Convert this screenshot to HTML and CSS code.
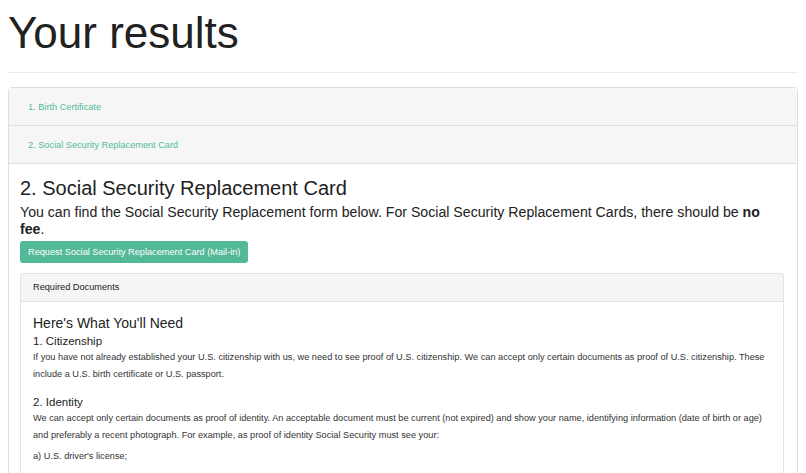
FILE: index.html
```html
<!DOCTYPE html>
<html lang="en">
<head>
<meta charset="utf-8">
<title>Your results</title>
<link rel="stylesheet" href="styles.css">
</head>
<body>
<h1 class="title">Your results</h1>
<hr class="rule">
<div class="accordion">
  <div class="acc-heading"><a class="acc-link" href="#">1. Birth Certificate</a></div>
  <div class="acc-heading"><a class="acc-link" href="#">2. Social Security Replacement Card</a></div>
  <div class="acc-body">
    <h2 class="section-title">2. Social Security Replacement Card</h2>
    <p class="lead">You can find the Social Security Replacement form below. For Social Security Replacement Cards, there should be <strong>no fee</strong>.</p>
    <a class="btn" href="#">Request Social Security Replacement Card (Mail-in)</a>
    <div class="panel">
      <div class="panel-heading">Required Documents</div>
      <div class="panel-body">
        <h3 class="need">Here's What You'll Need</h3>
        <h4 class="item-title first">1. Citizenship</h4>
        <p class="text">If you have not already established your U.S. citizenship with us, we need to see proof of U.S. citizenship. We can accept only certain documents as proof of U.S. citizenship. These include a U.S. birth certificate or U.S. passport.</p>
        <h4 class="item-title">2. Identity</h4>
        <p class="text">We can accept only certain documents as proof of identity. An acceptable document must be current (not expired) and show your name, identifying information (date of birth or age) and preferably a recent photograph. For example, as proof of identity Social Security must see your:</p>
        <p class="text list">a) U.S. driver's license;</p>
      </div>
    </div>
  </div>
</div>
</body>
</html>
```
FILE: styles.css
```css
html, body {
  overflow: hidden;
}
body {
  margin: 8px;
  font-family: "Liberation Sans", Arial, Helvetica, sans-serif;
  color: #333;
  background: #fff;
}
.title {
  margin: 0;
  font-size: 44px;
  line-height: 50px;
  font-weight: 400;
  color: #212121;
}
.rule {
  margin: 14px 0 0;
  border: 0;
  border-top: 1px solid #eaeaea;
}
.accordion {
  margin-top: 14px;
  border: 1px solid #dedede;
  border-radius: 4px;
}
.acc-heading {
  height: 37px;
  display: flex;
  align-items: center;
  padding: 0 19px;
  background: #f6f6f6;
  border-bottom: 1px solid #e0e0e0;
}
.acc-link {
  font-size: 9.2px;
  color: #54bb97;
  text-decoration: none;
}
.acc-body {
  padding: 13px 13px 20px 11px;
}
.section-title {
  margin: 0 0 4px;
  font-size: 20px;
  line-height: 23px;
  font-weight: 400;
  color: #222;
}
.lead {
  margin: 0 0 3px;
  font-size: 14.15px;
  line-height: 17px;
  color: #222;
}
.lead strong {
  font-weight: 700;
}
.btn {
  display: inline-block;
  height: 22px;
  line-height: 22px;
  padding: 0 8px;
  font-size: 9.2px;
  color: #fff;
  background: #52b897;
  border-radius: 3px;
  text-decoration: none;
}
.panel {
  margin-top: 10px;
  border: 1px solid #e3e3e3;
  border-radius: 2px;
}
.panel-heading {
  height: 27px;
  line-height: 27px;
  padding: 0 12px;
  font-size: 9.2px;
  color: #222;
  background: #f5f5f5;
  border-bottom: 1px solid #e3e3e3;
}
.panel-body {
  padding: 13px 12px 20px;
}
.need {
  margin: 0 0 4px;
  font-size: 14px;
  line-height: 16px;
  font-weight: 400;
  color: #222;
}
.item-title {
  margin: 14px 0 1px;
  font-size: 11.5px;
  line-height: 13px;
  font-weight: 400;
  color: #222;
}
.item-title.first {
  margin-top: 0;
}
.text {
  margin: 0;
  font-size: 9.2px;
  line-height: 16.6px;
  color: #333;
}
.text.list {
  margin-top: 5px;
}
```
